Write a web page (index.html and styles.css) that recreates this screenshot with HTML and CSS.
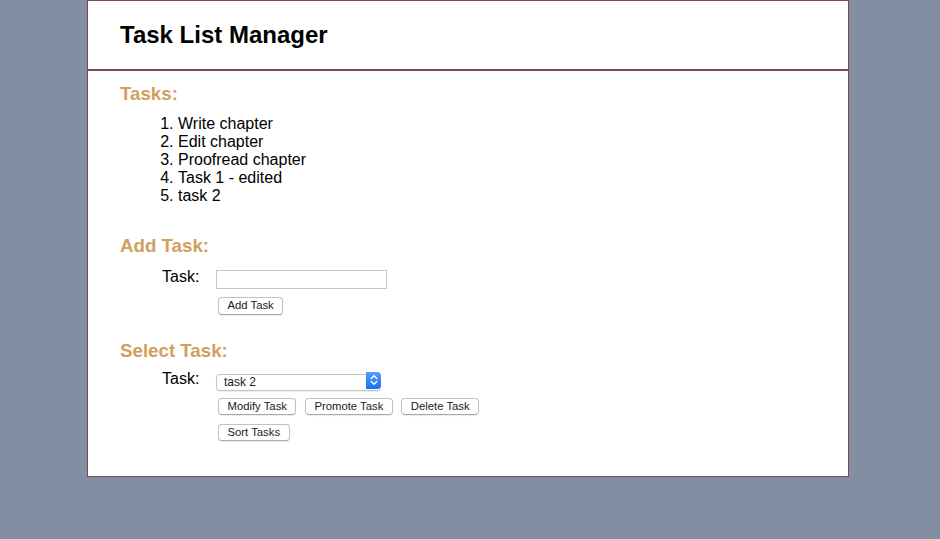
FILE: index.html
```html
<!DOCTYPE html>
<html lang="en">
<head>
<meta charset="utf-8">
<title>Task List Manager</title>
<link rel="stylesheet" href="styles.css">
</head>
<body>
<div class="page">
  <header class="header">
    <h1 class="title">Task List Manager</h1>
  </header>
  <main class="content">
    <section class="section section-tasks">
      <h2 class="section-title">Tasks:</h2>
      <ol class="task-list">
        <li>Write chapter</li>
        <li>Edit chapter</li>
        <li>Proofread chapter</li>
        <li>Task 1 - edited</li>
        <li>task 2</li>
      </ol>
    </section>
    <section class="section section-add">
      <h2 class="section-title">Add Task:</h2>
      <div class="form-row">
        <label class="form-label" for="newTask">Task:</label>
        <div class="form-field">
          <input class="text-input" id="newTask" type="text">
          <div class="btn-row">
            <button class="btn" type="button">Add Task</button>
          </div>
        </div>
      </div>
    </section>
    <section class="section section-select">
      <h2 class="section-title">Select Task:</h2>
      <div class="form-row">
        <label class="form-label" for="taskSelect">Task:</label>
        <div class="form-field">
          <div class="select-wrap">
            <select class="select" id="taskSelect">
              <option>Write chapter</option>
              <option>Edit chapter</option>
              <option>Proofread chapter</option>
              <option>Task 1 - edited</option>
              <option selected>task 2</option>
            </select>
            <span class="select-arrow">
              <svg width="8" height="12" viewBox="0 0 8 12" fill="none" stroke="#fff" stroke-width="1.4" stroke-linecap="round" stroke-linejoin="round"><path d="M1.2 4.6 L4 1.8 L6.8 4.6"/><path d="M1.2 7.4 L4 10.2 L6.8 7.4"/></svg>
            </span>
          </div>
          <div class="btn-row">
            <button class="btn" type="button">Modify Task</button>
            <button class="btn" type="button">Promote Task</button>
            <button class="btn" type="button">Delete Task</button>
          </div>
          <div class="btn-row">
            <button class="btn" type="button">Sort Tasks</button>
          </div>
        </div>
      </div>
    </section>
  </main>
</div>
</body>
</html>
```

FILE: styles.css
```css
html, body {
  margin: 0;
  padding: 0;
}

body {
  background: #828fa2;
  font-family: "Liberation Sans", Arial, Helvetica, sans-serif;
  color: #000;
  height: 539px;
  overflow: hidden;
}

.page {
  width: 760px;
  margin-left: 87px;
  background: #fff;
  border: 1px solid #7b4a50;
}

.header {
  padding: 20px 32px;
  border-bottom: 2px solid #7b4a50;
}

.title {
  margin: 0;
  font-size: 24px;
  line-height: 28px;
  font-weight: bold;
}

.content {
  padding: 0 32px 35px;
}

.section-title {
  margin: 0;
  font-size: 18.72px;
  line-height: 22px;
  font-weight: bold;
  color: #d0a05e;
}

.section-tasks .section-title {
  margin-top: 12px;
}

.section-add .section-title {
  margin-top: 30px;
}

.section-select .section-title {
  margin-top: 25px;
}

.task-list {
  margin: 10px 0 0;
  padding-left: 58px;
  font-size: 16px;
  line-height: 18px;
}

.form-row {
  display: grid;
  grid-template-columns: 54px auto;
  justify-content: start;
  padding-left: 42px;
  margin-top: 11px;
}

.section-select .form-row {
  margin-top: 8px;
}

.form-label {
  font-size: 16px;
  line-height: 18px;
}

.form-field {
  display: flex;
  flex-direction: column;
  align-items: flex-start;
  padding-top: 2px;
}

.text-input {
  box-sizing: border-box;
  width: 171px;
  height: 19px;
  margin: 0;
  padding: 0 4px;
  border: 1px solid #c6c6c6;
  background: #fff;
  font-family: "Liberation Sans", Arial, sans-serif;
  font-size: 12px;
  outline: none;
}

.btn-row {
  display: flex;
  gap: 8.5px;
  margin-top: 8px;
  padding-left: 2px;
}

.select-wrap + .btn-row {
  margin-top: 9px;
}

.btn-row + .btn-row {
  margin-top: 8.5px;
}

.btn {
  box-sizing: border-box;
  height: 17.5px;
  margin: 0;
  padding: 0 8.5px;
  border: 1px solid #c2c2c2;
  border-bottom-color: #a9a9a9;
  border-radius: 4px;
  background: #fff;
  color: #1a1a1a;
  font-family: "Liberation Sans", Arial, sans-serif;
  font-size: 11.3px;
  line-height: 15px;
  box-shadow: 0 0.5px 1px rgba(0, 0, 0, 0.08);
  cursor: default;
}

.select-wrap {
  position: relative;
  width: 165px;
  height: 17px;
}

.select {
  appearance: none;
  -webkit-appearance: none;
  box-sizing: border-box;
  width: 165px;
  height: 17px;
  margin: 0;
  padding: 0 20px 0 7px;
  border: 1px solid #c4c4c4;
  border-radius: 4px;
  background: #fff;
  color: #1a1a1a;
  font-family: "Liberation Sans", Arial, sans-serif;
  font-size: 12px;
  line-height: 15px;
  box-shadow: 0 0.5px 1px rgba(0, 0, 0, 0.08);
  outline: none;
}

.select-arrow {
  position: absolute;
  top: 0;
  right: 0;
  width: 15px;
  height: 17px;
  border-radius: 0 4px 4px 0;
  background: linear-gradient(#54a0fb, #1b6ef2);
  display: flex;
  align-items: center;
  justify-content: center;
  pointer-events: none;
}
```
